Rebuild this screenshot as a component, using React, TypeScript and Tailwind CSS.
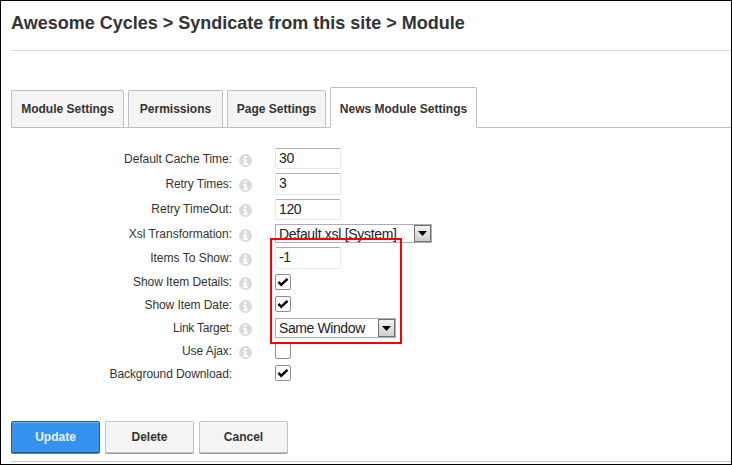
import type { ReactNode } from "react";

function InfoIcon() {
  return (
    <svg width="13" height="13" viewBox="0 0 13 13" className="block">
      <circle cx="6.5" cy="6.5" r="6.5" fill="#dadada" />
      <path d="M5.2 2h2.4v2H5.2zM4 5h3.6v4.5H9V11H4V9.500h1.300V6.400H4z" fill="#fff" />
    </svg>
  );
}

function TextBox({ value, className }: { value: string; className: string }) {
  return (
    <div className={`w-[66px] rounded-[2px] border border-[#e2e8f0] border-t-[#abadb3] bg-white pl-[3px] text-[14px] leading-[19px] tracking-[-0.4px] text-[#222] ${className}`}>
      {value}
    </div>
  );
}

function Select({ value, className, text }: { value: string; className: string; text: string }) {
  return (
    <div className={`flex justify-between border border-[#abadb3] bg-white pl-[3px] text-[14px] text-[#222] ${className}`}>
      <span className={`whitespace-nowrap ${text}`}>{value}</span>
      <span className="flex w-[17px] shrink-0 items-center justify-center border border-[#707070] bg-linear-to-b from-[#f2f2f2] to-[#cfcfcf]">
        <svg width="9" height="5" viewBox="0 0 9 5" className="shrink-0">
          <path d="M0 0h9L4.5 5z" fill="#000" />
        </svg>
      </span>
    </div>
  );
}

function Check({ on, className }: { on: boolean; className: string }) {
  return (
    <div className={`flex size-4 items-center justify-center rounded-[2px] border border-[#8e8f8f] bg-[#fdfdfd] ${className}`}>
      {on && (
        <svg width="12" height="12" viewBox="0 0 12 12">
          <path d="M1.4 5.8 4.2 8.8 10.5 2.900" fill="none" stroke="#000" strokeWidth="2.5" />
        </svg>
      )}
    </div>
  );
}

function Row({ label, height, info = true, spacing, children }: { label: string; height: string; info?: boolean; spacing: string; children: ReactNode }) {
  return (
    <div className={`flex items-start ${height}`}>
      <div className={`w-[221px] pt-[5px] text-right text-[12px] leading-4 whitespace-nowrap text-[#333] ${spacing}`}>{label}</div>
      <div className="w-[43px] pt-2 pl-[7px]">{info && <InfoIcon />}</div>
      {children}
    </div>
  );
}

function Tab({ label, className }: { label: string; className: string }) {
  return (
    <div className={`flex justify-center rounded-t-[2px] border border-[#bfbfbf] text-[12px] leading-4 font-bold whitespace-nowrap text-[#333] ${className}`}>
      {label}
    </div>
  );
}

function Button({ label, className }: { label: string; className: string }) {
  return (
    <button className={`h-8 w-[89px] rounded-[2px] border text-[12px] leading-4 font-bold ${className}`}>{label}</button>
  );
}

export default function App() {
  return (
    <div className="relative h-[465px] w-[732px] overflow-hidden border border-black bg-white pl-[10px] font-['Liberation_Sans',Arial,sans-serif]">
      <h1 className="h-[49px] pt-[10px] text-[18px] leading-6 font-bold whitespace-nowrap text-[#333]">
        Awesome Cycles &gt; Syndicate from this site &gt; Module
      </h1>
      <div className="h-px bg-[#dcdcdc]" />
      <div className="mt-9 flex h-[41px] items-end gap-1 border-b border-[#bfbfbf]">
        <Tab label="Module Settings" className="-mb-px h-[38px] w-[113px] bg-[#f4f4f4] pt-[10px]" />
        <Tab label="Permissions" className="-mb-px h-[38px] w-[95px] bg-[#f4f4f4] pt-[10px]" />
        <Tab label="Page Settings" className="-mb-px h-[38px] w-[99px] bg-[#f4f4f4] pt-[10px]" />
        <Tab label="News Module Settings" className="-mb-px h-[41px] w-[147px] border-b-white bg-white pt-[13px]" />
      </div>
      <div className="mt-[18px]">
        <Row label="Default Cache Time:" height="h-[25px]" spacing="tracking-[-0.04px]">
          <TextBox value="30" className="mt-[2px] h-[21px]" />
        </Row>
        <Row label="Retry Times:" height="h-[25px]" spacing="tracking-[-0.06px]">
          <TextBox value="3" className="mt-[2px] h-[22px]" />
        </Row>
        <Row label="Retry TimeOut:" height="h-[25px]" spacing="tracking-normal">
          <TextBox value="120" className="mt-[3px] h-[21px]" />
        </Row>
        <Row label="Xsl Transformation:" height="h-[24px]" spacing="tracking-normal">
          <Select value="Default.xsl [System]" className="mt-[3px] h-[19px] w-[157px]" text="leading-[18px] tracking-[-0.3px]" />
        </Row>
        <Row label="Items To Show:" height="h-[24px]" spacing="tracking-normal">
          <TextBox value="-1" className="mt-[2px] h-[22px]" />
        </Row>
        <Row label="Show Item Details:" height="h-[23px]" spacing="tracking-[-0.06px]">
          <Check on className="mt-[5px]" />
        </Row>
        <Row label="Show Item Date:" height="h-[23px]" spacing="tracking-[-0.08px]">
          <Check on className="mt-[4px]" />
        </Row>
        <Row label="Link Target:" height="h-[23px]" spacing="tracking-[-0.24px]">
          <Select value="Same Window" className="mt-[3px] h-[20px] w-[121px]" text="leading-[18px] tracking-[-0.4px]" />
        </Row>
        <Row label="Use Ajax:" height="h-[23px]" spacing="tracking-[-0.08px]">
          <Check on={false} className="mt-[5px]" />
        </Row>
        <Row label="Background Download:" height="h-[23px]" info={false} spacing="tracking-[-0.08px]">
          <Check on className="mt-[4px]" />
        </Row>
      </div>
      <div className="mt-[37px] flex h-[41px] gap-[5px] border-b border-[#c8c8c8]">
        <Button label="Update" className="border-[#1a5ca8] bg-[#3791ee] text-[#e8f3ff] shadow-[0_1px_0_#777,inset_0_1px_0_#6fb3f7]" />
        <Button label="Delete" className="border-[#c4c4c4] bg-[#f4f4f4] text-[#333] shadow-[0_1px_0_#999,inset_0_1px_0_#fff]" />
        <Button label="Cancel" className="border-[#c4c4c4] bg-[#f4f4f4] text-[#333] shadow-[0_1px_0_#999,inset_0_1px_0_#fff]" />
      </div>
      {/* Highlight drawn over the item display options */}
      <div className="absolute top-[237px] left-[269px] h-[106px] w-[132px] border-2 border-[#ff0000]" />
    </div>
  );
}
